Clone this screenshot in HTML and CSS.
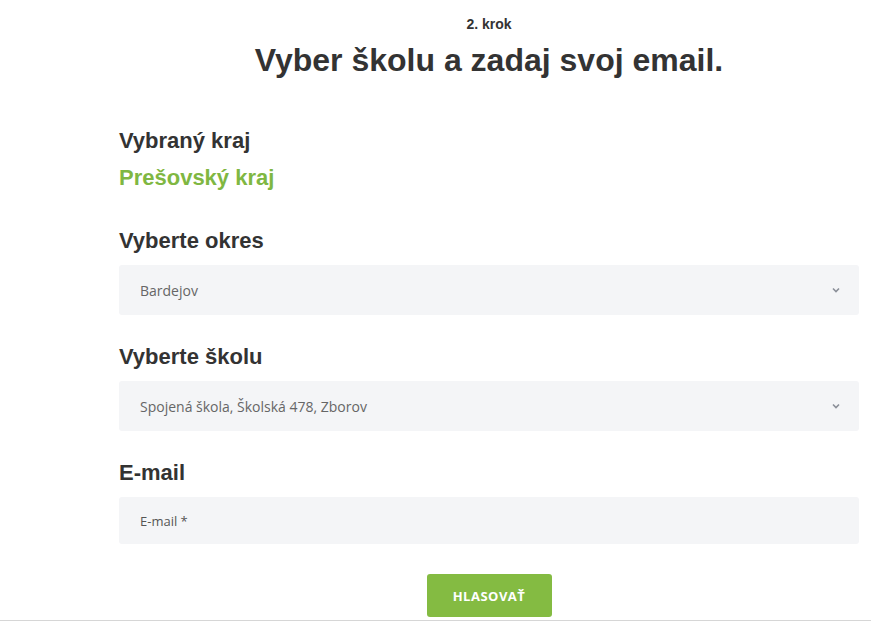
FILE: index.html
```html
<!DOCTYPE html>
<html>

<head>
    <title>Hlasovanie</title>
    <link rel="stylesheet" href="styles.css">
</head>

<body>
    <div class="Page">
        <div class="Form">
            <p class="step">2. krok</p>
            <h1 class="title">Vyber školu a zadaj svoj email.</h1>

            <div class="field">
                <h2 class="label">Vybraný kraj</h2>
                <p class="region">Prešovský kraj</p>
            </div>

            <div class="field">
                <h2 class="label">Vyberte okres</h2>
                <div class="select">
                    <span>Bardejov</span>
                    <svg class="chevron" width="8" height="6" viewBox="0 0 8 6">
                        <path d="M1 1.5 L4 4.5 L7 1.5" fill="none" stroke="#8a8f98" stroke-width="1.6" />
                    </svg>
                </div>
            </div>

            <div class="field">
                <h2 class="label">Vyberte školu</h2>
                <div class="select">
                    <span>Spojená škola, Školská 478, Zborov</span>
                    <svg class="chevron" width="8" height="6" viewBox="0 0 8 6">
                        <path d="M1 1.5 L4 4.5 L7 1.5" fill="none" stroke="#8a8f98" stroke-width="1.6" />
                    </svg>
                </div>
            </div>

            <div class="field">
                <h2 class="label">E-mail</h2>
                <div class="input">E-mail *</div>
            </div>

            <div class="actions">
                <button class="submit">HLASOVAŤ</button>
            </div>
        </div>
    </div>
</body>

</html>
```

FILE: styles.css
```css
body {
    margin: 0;
    background-color: #fff;
    font-family: "Liberation Sans", Arial, sans-serif;
    color: #333;
}

.Page {
    border-bottom: 1px solid #d6d6d6;
    height: 620px;
}

.Form {
    width: 740px;
    margin: 0 0 0 119px;
    padding-top: 15px;
}

.step {
    margin: 0;
    text-align: center;
    font-size: 14px;
    font-weight: bold;
    line-height: 18px;
}

.title {
    margin: 7px 0 0 0;
    text-align: center;
    font-size: 32px;
    line-height: 40px;
}

.field {
    margin-top: 29px;
}

.field:first-of-type {
    margin-top: 48px;
    padding-bottom: 7px;
}

.label {
    margin: 0 0 11px 0;
    font-size: 22px;
    line-height: 26px;
}

.region {
    margin: -1px 0 0 0;
    color: #7fb742;
    font-size: 22px;
    font-weight: bold;
    line-height: 28px;
}

.select,
.input {
    background-color: #f4f5f7;
    border-radius: 3px;
    height: 50px;
    padding: 0 21px;
    display: flex;
    align-items: center;
    justify-content: space-between;
    font-family: "Open Sans", sans-serif;
    font-size: 14px;
    color: #666;
}

.input {
    height: 47px;
    font-size: 13px;
    color: #555;
}

.chevron {
    margin-right: -2px;
}

.actions {
    display: flex;
    justify-content: center;
    margin-top: 30px;
}

.submit {
    background-color: #84bb42;
    color: #fff;
    border: none;
    border-radius: 3px;
    width: 125px;
    height: 43px;
    font-family: "Open Sans", sans-serif;
    font-weight: bold;
    font-size: 13px;
    letter-spacing: 0.5px;
    cursor: pointer;
}
```
